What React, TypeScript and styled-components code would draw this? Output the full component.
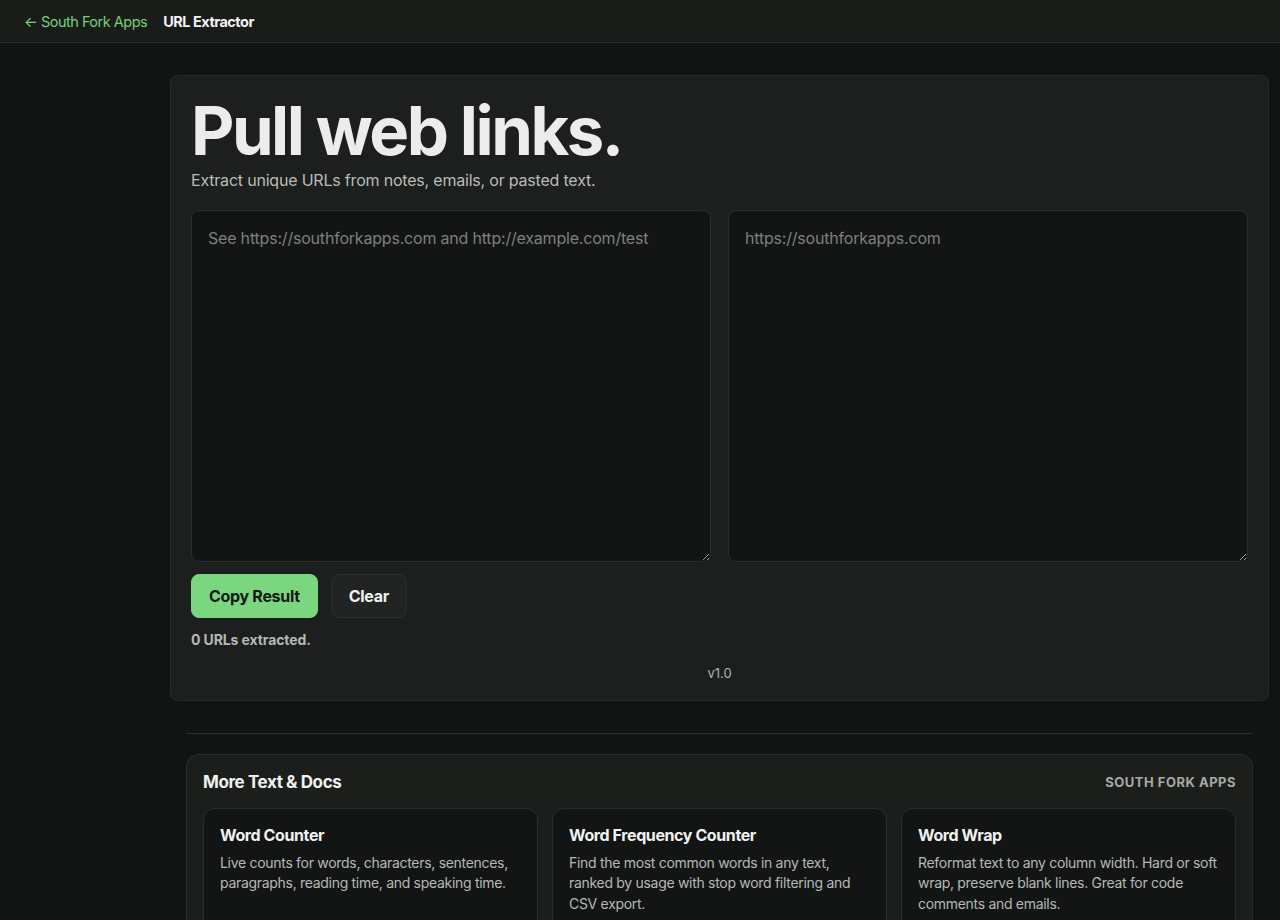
import React, { useState } from "react";
import styled, { createGlobalStyle } from "styled-components";

const GlobalStyle = createGlobalStyle`
  html, body {
    margin: 0;
    padding: 0;
    background: #121413;
    color: #ecefec;
    font-family: Inter, "Liberation Sans", sans-serif;
  }
  * { box-sizing: border-box; }
`;

const tools = [
  {
    name: "Word Counter",
    desc: "Live counts for words, characters, sentences, paragraphs, reading time, and speaking time.",
  },
  {
    name: "Word Frequency Counter",
    desc: "Find the most common words in any text, ranked by usage with stop word filtering and CSV export.",
  },
  {
    name: "Word Wrap",
    desc: "Reformat text to any column width. Hard or soft wrap, preserve blank lines. Great for code comments and emails.",
  },
];

const extract = (text: string) => {
  const found = text.match(/https?:\/\/[^\s<>"')]+/g) || [];
  return Array.from(new Set(found));
};

export default () => {
  const [input, setInput] = useState("");
  const urls = extract(input);
  return (
    <>
      <GlobalStyle />
      <Header>
        <BackLink href="#">← South Fork Apps</BackLink>
        <PageName>URL Extractor</PageName>
      </Header>
      <Main>
        <ToolCard>
          <Title>Pull web links.</Title>
          <Lead>Extract unique URLs from notes, emails, or pasted text.</Lead>
          <Panes>
            <Area
              value={input}
              onChange={(e) => setInput(e.target.value)}
              placeholder="See https://southforkapps.com and http://example.com/test"
            />
            <Area readOnly value={urls.join("\n")} placeholder="https://southforkapps.com" />
          </Panes>
          <Actions>
            <Button primary>Copy Result</Button>
            <Button onClick={() => setInput("")}>Clear</Button>
          </Actions>
          <Status>{urls.length} URLs extracted.</Status>
          <Version>v1.0</Version>
        </ToolCard>
        <Divider />
        <MoreCard>
          <MoreHead>
            <MoreTitle>More Text &amp; Docs</MoreTitle>
            <Brand>South Fork Apps</Brand>
          </MoreHead>
          <ToolGrid>
            {tools.map((t) => (
              <Tile key={t.name}>
                <TileName>{t.name}</TileName>
                <TileDesc>{t.desc}</TileDesc>
              </Tile>
            ))}
          </ToolGrid>
        </MoreCard>
      </Main>
    </>
  );
};

const Header = styled.header`
  display: flex;
  align-items: center;
  gap: 16px;
  height: 43px;
  padding: 0 24px;
  background: #1a1c1a;
  border-bottom: 1px solid #2a2e2b;
  font-size: 14.5px;
`;

const BackLink = styled.a`
  color: #72d178;
  text-decoration: none;
  letter-spacing: -0.5px;
`;

const PageName = styled.span`
  color: #f2f4f2;
  font-weight: 700;
  letter-spacing: -0.5px;
`;

const Main = styled.main`
  padding: 32px 11px 0 170px;
`;

const ToolCard = styled.section`
  background: #1c1f1d;
  border: 1px solid #2a2e2b;
  border-radius: 8px;
  padding: 20px 20px 19px;
`;

const Title = styled.h1`
  margin: 0;
  font-size: 67px;
  font-weight: 700;
  line-height: 1.04;
  letter-spacing: -2.5px;
  color: #ececec;
`;

const Lead = styled.p`
  margin: 4px 0 20px;
  font-size: 16px;
  color: #b9bdb9;
  letter-spacing: -0.2px;
`;

const Panes = styled.div`
  display: grid;
  grid-template-columns: 1fr 1fr;
  gap: 17px;
`;

const Area = styled.textarea`
  height: 352px;
  resize: vertical;
  background: #131514;
  border: 1px solid #2a2e2b;
  border-radius: 8px;
  padding: 15px 16px 16px;
  color: #e8ebe8;
  font-family: Inter, "Liberation Sans", sans-serif;
  font-size: 16px;
  line-height: 1.5;
  letter-spacing: -0.2px;
  outline: none;
  &::placeholder {
    color: #7c807c;
  }
`;

const Actions = styled.div`
  display: flex;
  gap: 13px;
  margin-top: 12px;
`;

const Button = styled.button<{ primary?: boolean }>`
  height: 44px;
  padding: 0 17px;
  border-radius: 8px;
  border: 1px solid ${({ primary }) => (primary ? "#7bd680" : "#2a2e2b")};
  background: ${({ primary }) => (primary ? "#7bd680" : "#212422")};
  color: ${({ primary }) => (primary ? "#0e1a0f" : "#f0f2f0")};
  font-family: Inter, "Liberation Sans", sans-serif;
  font-size: 16px;
  font-weight: 700;
  letter-spacing: -0.3px;
  cursor: pointer;
`;

const Status = styled.p`
  margin: 13px 0 0;
  font-size: 14px;
  font-weight: 700;
  color: #b5b9b5;
  letter-spacing: -0.1px;
`;

const Version = styled.div`
  margin-top: 17px;
  text-align: center;
  font-size: 13px;
  color: #b0b4b0;
`;

const Divider = styled.hr`
  margin: 32px 16px 20px;
  border: 0;
  border-top: 1px solid #2a302c;
`;

const MoreCard = styled.section`
  margin: 0 16px;
  background: #1c1e1c;
  border: 1px solid #2a2e2b;
  border-radius: 12px;
  padding: 17px 16px 16px;
`;

const MoreHead = styled.div`
  display: flex;
  align-items: center;
  justify-content: space-between;
  margin-bottom: 16px;
`;

const MoreTitle = styled.h2`
  margin: 0;
  font-size: 17px;
  font-weight: 700;
  letter-spacing: -0.4px;
  color: #f0f2f0;
`;

const Brand = styled.span`
  font-size: 13px;
  font-weight: 700;
  text-transform: uppercase;
  letter-spacing: 0.5px;
  color: #a6aaa6;
`;

const ToolGrid = styled.div`
  display: grid;
  grid-template-columns: repeat(3, 1fr);
  gap: 14px;
`;

const Tile = styled.a`
  display: block;
  background: #131514;
  border: 1px solid #2a2e2b;
  border-radius: 12px;
  padding: 16px;
  min-height: 130px;
`;

const TileName = styled.h3`
  margin: 0 0 8px;
  font-size: 16px;
  font-weight: 700;
  letter-spacing: -0.4px;
  color: #f0f2f0;
`;

const TileDesc = styled.p`
  margin: 0;
  font-size: 14px;
  line-height: 20.5px;
  color: #b5b9b5;
  letter-spacing: -0.3px;
`;
